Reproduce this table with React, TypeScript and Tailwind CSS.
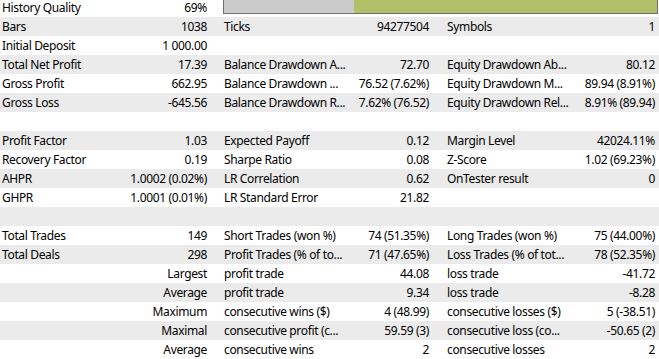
import React from "react";

type Row = string[] | null;

const rows: Row[] = [
  ["Bars", "1038", "Ticks", "94277504", "Symbols", "1"],
  ["Initial Deposit", "1 000.00", "", "", "", ""],
  ["Total Net Profit", "17.39", "Balance Drawdown A...", "72.70", "Equity Drawdown Ab...", "80.12"],
  ["Gross Profit", "662.95", "Balance Drawdown ...", "76.52 (7.62%)", "Equity Drawdown M...", "89.94 (8.91%)"],
  ["Gross Loss", "-645.56", "Balance Drawdown R...", "7.62% (76.52)", "Equity Drawdown Rel...", "8.91% (89.94)"],
  null,
  ["Profit Factor", "1.03", "Expected Payoff", "0.12", "Margin Level", "42024.11%"],
  ["Recovery Factor", "0.19", "Sharpe Ratio", "0.08", "Z-Score", "1.02 (69.23%)"],
  ["AHPR", "1.0002 (0.02%)", "LR Correlation", "0.62", "OnTester result", "0"],
  ["GHPR", "1.0001 (0.01%)", "LR Standard Error", "21.82", "", ""],
  null,
  ["Total Trades", "149", "Short Trades (won %)", "74 (51.35%)", "Long Trades (won %)", "75 (44.00%)"],
  ["Total Deals", "298", "Profit Trades (% of to...", "71 (47.65%)", "Loss Trades (% of tot...", "78 (52.35%)"],
  ["", "Largest", "profit trade", "44.08", "loss trade", "-41.72"],
  ["", "Average", "profit trade", "9.34", "loss trade", "-8.28"],
  ["", "Maximum", "consecutive wins ($)", "4 (48.99)", "consecutive losses ($)", "5 (-38.51)"],
  ["", "Maximal", "consecutive profit (c...", "59.59 (3)", "consecutive loss (co...", "-50.65 (2)"],
  ["", "Average", "consecutive wins", "2", "consecutive losses", "2"],
];

const grid = "grid grid-cols-[115px_104px_131px_91px_134px_84px] h-[19px] leading-[19px]";

export default function App() {
  return (
    <div
      className="w-[659px] h-[359px] overflow-hidden bg-white text-black text-[12px] tracking-[-0.35px]"
      style={{ fontFamily: '"Noto Sans", "Open Sans", sans-serif' }}
    >
      <div className="-mt-[2px]">
        <div className={`${grid} bg-white`}>
          <div className="pl-[2px] whitespace-nowrap overflow-hidden">History Quality</div>
          <div className="pr-[12px] text-right whitespace-nowrap">69%</div>
          <div className="col-span-4 pl-[4px] pr-[1px] pt-[1px]">
            <div className="h-[15px] border border-[#6e6e6e] flex">
              <div className="w-[130px] bg-[#cbcbcb]" />
              <div className="flex-1 bg-[#b3c06a]" />
            </div>
          </div>
        </div>
        {rows.map((r, i) => (
          <div key={i} className={`${grid} ${i % 2 === 0 ? "bg-[#ebebeb]" : "bg-white"}`}>
            {r && (
              <>
                <div className="pl-[2px] whitespace-nowrap overflow-hidden">{r[0]}</div>
                <div className="pr-[12px] text-right whitespace-nowrap overflow-hidden">{r[1]}</div>
                <div className="pl-[5px] whitespace-nowrap overflow-hidden">{r[2]}</div>
                <div className="pr-[12px] text-right whitespace-nowrap overflow-hidden">{r[3]}</div>
                <div className="pl-[6px] whitespace-nowrap overflow-hidden">{r[4]}</div>
                <div className="pr-[4px] text-right whitespace-nowrap overflow-hidden">{r[5]}</div>
              </>
            )}
          </div>
        ))}
      </div>
    </div>
  );
}
